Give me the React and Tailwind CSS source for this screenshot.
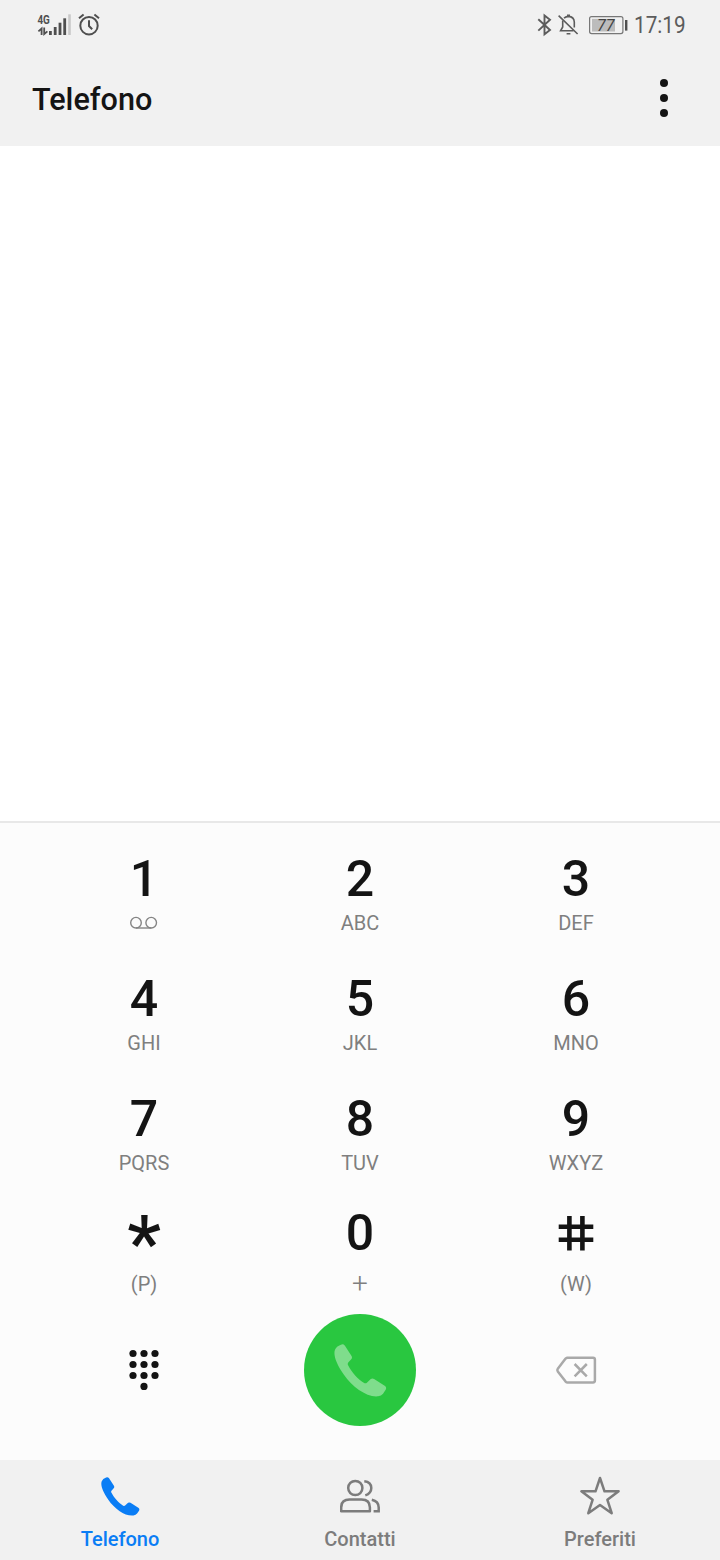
import React, { useState } from 'react';

const KEYS = [
    { digit: '1', voicemail: true },
    { digit: '2', letters: 'ABC' },
    { digit: '3', letters: 'DEF' },
    { digit: '4', letters: 'GHI' },
    { digit: '5', letters: 'JKL' },
    { digit: '6', letters: 'MNO' },
    { digit: '7', letters: 'PQRS' },
    { digit: '8', letters: 'TUV' },
    { digit: '9', letters: 'WXYZ' },
];

const PhoneIcon = ({ className }) => (
    <svg viewBox="115 115 160 160" fill="currentColor" className={className}>
        <path d="M136 117Q143 114 148 120L168 151Q171 157 167 161L158 171Q155 175 158 180C168 200 188 222 206 233Q211 235 215 231L226 221Q231 218 236 221L268 241Q275 246 271 253L263 265Q258 272 248 273C215 277 170 245 145 208C122 175 112 148 118 132Q122 122 136 117Z" />
    </svg>
);

const SignalIcon = () => (
    <svg viewBox="36 12 36 26" className="w-9 h-[26px]" fill="#4f4f4f">
        <text x="37.4" y="23.8" fontSize="13" fontWeight="700" textLength="12.4" lengthAdjust="spacingAndGlyphs">4G</text>
        <path d="M41.6 35V28.6L38.4 31.4M44.2 27.5V34L47.4 31.4" fill="none" stroke="#4f4f4f" strokeWidth="1.8" />
        <rect x="49" y="31" width="2.8" height="4" />
        <rect x="53.8" y="27" width="2.8" height="8" />
        <rect x="58.6" y="22.7" width="2.8" height="12.3" />
        <rect x="63.3" y="18.3" width="2.8" height="16.7" />
        <rect x="68.2" y="14.3" width="2.6" height="20.7" fill="#c9c9c9" />
    </svg>
);

const AlarmIcon = () => (
    <svg viewBox="77 12 24 26" className="w-6 h-[26px]" fill="none" stroke="#4f4f4f" strokeWidth="2">
        <circle cx="89" cy="25.7" r="8.7" />
        <path d="M89 20.3V26L92.2 29.2M79 18.2L83.6 14.4M94.4 14.4L99 18.2" />
    </svg>
);

const BluetoothIcon = () => (
    <svg viewBox="536 12 17 26" className="w-[17px] h-[26px]" fill="none" stroke="#5c5c5c" strokeWidth="1.9">
        <path d="M538.3 19.2L550 30L544.5 34.3V15.4L550 19.8L538.3 30.6" />
    </svg>
);

const BellOffIcon = () => (
    <svg viewBox="557 12 23 26" className="w-[23px] h-[26px]" fill="none" stroke="#5c5c5c" strokeWidth="1.6">
        <path d="M562.7 20.5V27L560.6 30.8H573.5M564 18.1Q566 16.4 568.6 16.4Q574 16.8 574.3 22V27.4" />
        <path d="M567 15.4H570M566.6 33.8H570.4M558.6 15.6L577.6 34" />
    </svg>
);

const BatteryIcon = () => (
    <svg viewBox="588 12 41 26" className="w-[41px] h-[26px]">
        <rect x="589.6" y="16.6" width="33.3" height="17" rx="2" fill="none" stroke="#777777" strokeWidth="1.2" />
        <rect x="592" y="18.9" width="23" height="12.6" fill="#bcbcbc" />
        <rect x="625" y="20" width="2.4" height="10.6" fill="#4f4f4f" />
        <text x="597" y="30.8" fontSize="16" fontStyle="italic" fill="#444444">77</text>
    </svg>
);

const VoicemailIcon = () => (
    <svg viewBox="130 916 28 14" className="w-7 h-3.5" fill="none" stroke="#858585" strokeWidth="1.4">
        <circle cx="136" cy="922.7" r="5.3" />
        <circle cx="151.2" cy="922.7" r="5.3" />
        <path d="M136 928H151.2" />
    </svg>
);

const HashIcon = () => (
    <svg viewBox="558 1214 36 36" className="w-9 h-9" fill="none" stroke="#141414" strokeWidth="4.6">
        <path d="M569.4 1215V1249.5M582.4 1215V1249.5M558.7 1225.7H593.3M558.7 1238.8H593.3" />
    </svg>
);

const DialpadIcon = () => (
    <svg viewBox="129 1349 30 42" className="w-[30px] h-[42px]" fill="#141414">
        {[1353.5, 1364.5, 1375.5].map((y) =>
            [133, 144, 155].map((x) => <circle key={`${x}-${y}`} cx={x} cy={y} r="3.6" />)
        )}
        <circle cx="144" cy="1386.4" r="3.6" />
    </svg>
);

const BackspaceIcon = () => (
    <svg viewBox="555 1355 42 30" className="w-[42px] h-[30px]" fill="none" stroke="#a9a9a9" strokeWidth="2.5" strokeLinejoin="round">
        <path d="M567.5 1357.7H593Q594.9 1357.7 594.9 1359.6V1380.6Q594.9 1382.5 593 1382.5H567.5Q566.5 1382.5 565.6 1381.6L557.8 1371.4Q556.8 1370.1 557.8 1368.8L565.6 1358.6Q566.5 1357.7 567.5 1357.7Z" />
        <path d="M574.6 1364L586.8 1376.4M586.8 1364L574.6 1376.4" />
    </svg>
);

const ContactsIcon = () => (
    <svg viewBox="340 1479 40 34" className="w-10 h-[34px]" fill="none" stroke="#7c7c7c" strokeWidth="2.5">
        <circle cx="355.3" cy="1488" r="7.1" />
        <path d="M341.2 1511.2V1507.5Q341.2 1499.6 349.5 1499.6H361.5Q369.9 1499.6 369.9 1507.5V1511.2Z" strokeLinejoin="round" />
        <path d="M364.3 1481.2Q371.3 1482 371.3 1488Q371.3 1493.3 365.3 1495.4M371.8 1499.7Q378.7 1501.2 378.7 1507.5V1511.2H373.6" />
    </svg>
);

const StarIcon = () => (
    <svg viewBox="579 1476 42 42" className="w-[42px] h-[42px]" fill="none" stroke="#7c7c7c" strokeWidth="2.5" strokeLinejoin="round">
        <path d="M600 1479L604.5 1492.3H618.6L607.4 1500.8L611.7 1514.2L600 1506L588.3 1514.2L592.6 1500.8L581.4 1492.3H595.5Z" />
    </svg>
);

const Key = ({ children, label, onClick }) => (
    <button onClick={onClick} className="flex flex-col items-center h-[120px] pt-[26px]">
        <span className="flex items-center justify-center h-[60px] text-[50px] leading-[60px] font-medium">{children}</span>
        <span className="flex items-center justify-center h-6 mt-0.5 text-xl leading-6 text-[#7f7f7f]">{label}</span>
    </button>
);

const App = () => {
    const [tab, setTab] = useState('telefono');

    const tabColor = (name) => (tab === name ? 'text-[#0a7df5]' : 'text-[#7c7c7c]');

    return (
        <div className="flex flex-col w-[720px] h-[1560px] bg-white text-[#141414] font-['Roboto',sans-serif] overflow-hidden">
            <header className="h-[146px] shrink-0 bg-[#f1f1f1]">
                <div className="flex items-center h-[50px] pl-9 pr-[35px]">
                    <SignalIcon />
                    <div className="ml-[5px]"><AlarmIcon /></div>
                    <div className="flex items-center ml-auto">
                        <BluetoothIcon />
                        <div className="ml-1"><BellOffIcon /></div>
                        <div className="ml-2"><BatteryIcon /></div>
                        <span className="w-[51px] ml-[5px] mt-0.5 text-[23px] leading-6 text-[#5c5c5c] whitespace-nowrap origin-left scale-x-[0.9]">17:19</span>
                    </div>
                </div>
                <div className="flex items-center justify-between h-24 pl-8 pr-[52px]">
                    <h1 className="pt-[3px] text-[30.6px] leading-10 font-medium">Telefono</h1>
                    <button className="flex flex-col items-center gap-[7px]">
                        <span className="size-2 rounded-full bg-[#141414]"></span>
                        <span className="size-2 rounded-full bg-[#141414]"></span>
                        <span className="size-2 rounded-full bg-[#141414]"></span>
                    </button>
                </div>
            </header>

            <main className="flex-1"></main>

            <section className="h-[639px] shrink-0 px-9 bg-[#fcfcfc] border-t-2 border-[#e8e8e8]">
                <div className="grid grid-cols-3">
                    {KEYS.map((key) => (
                        <Key key={key.digit} label={key.voicemail ? <VoicemailIcon /> : key.letters}>{key.digit}</Key>
                    ))}
                </div>
                <div className="grid grid-cols-3 h-[131px] -mt-1.5">
                    <Key label={<span className="mt-3.5">(P)</span>}>
                        <span className="h-10 text-[76px] leading-[60px]">*</span>
                    </Key>
                    <Key label={<span className="mt-3.5 text-[28px] font-light">+</span>}>0</Key>
                    <Key label={<span className="mt-3.5">(W)</span>}><HashIcon /></Key>
                </div>
                <div className="grid grid-cols-3 items-center justify-items-center h-28 mt-1.5">
                    <button><DialpadIcon /></button>
                    <button className="flex items-center justify-center size-28 rounded-full bg-[#29c740]">
                        <PhoneIcon className="size-[53px] text-[#7fdd8c]" />
                    </button>
                    <button><BackspaceIcon /></button>
                </div>
            </section>

            <nav className="grid grid-cols-3 h-[100px] shrink-0 bg-[#f1f1f1] text-xl leading-6 font-medium">
                <button onClick={() => setTab('telefono')} className={`flex flex-col items-center pt-[15px] ${tabColor('telefono')}`}>
                    <span className="flex items-center h-[42px] mb-2.5"><PhoneIcon className="size-[39px]" /></span>
                    Telefono
                </button>
                <button onClick={() => setTab('contatti')} className={`flex flex-col items-center pt-[15px] ${tabColor('contatti')}`}>
                    <span className="flex items-center h-[42px] mb-2.5"><ContactsIcon /></span>
                    Contatti
                </button>
                <button onClick={() => setTab('preferiti')} className={`flex flex-col items-center pt-[15px] ${tabColor('preferiti')}`}>
                    <span className="flex items-center h-[42px] mb-2.5"><StarIcon /></span>
                    Preferiti
                </button>
            </nav>
        </div>
    );
};

export default App;
